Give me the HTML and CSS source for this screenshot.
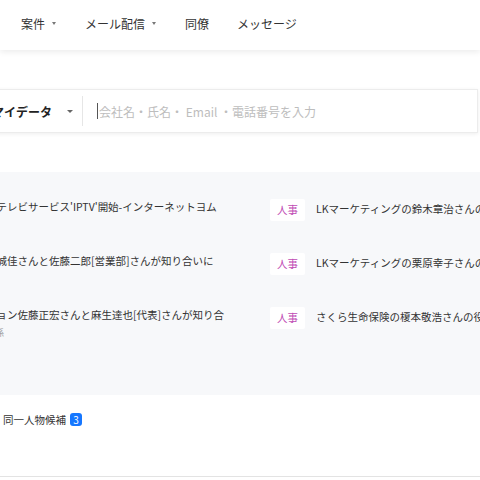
FILE: index.html
```html
<!DOCTYPE html>
<html lang="ja">
<head>
<meta charset="utf-8">
<title>マイデータ</title>
<link rel="stylesheet" href="styles.css">
</head>
<body>
<header class="topbar">
  <nav class="nav">
    <a class="nav-item">案件<span class="caret"></span></a>
    <a class="nav-item">メール配信<span class="caret"></span></a>
    <a class="nav-item">同僚</a>
    <a class="nav-item">メッセージ</a>
  </nav>
</header>
<main class="main">
  <div class="search">
    <div class="scope">マイデータ<span class="caret scope-caret"></span></div>
    <div class="divider"></div>
    <div class="query"><span class="cursor"></span><span class="placeholder">会社名・氏名・ Email ・電話番号を入力</span></div>
  </div>
  <section class="news">
    <div class="row">
      <div class="title-col"><p class="title">光テレビサービス'IPTV'開始-インターネットヨム</p></div>
      <span class="tag">人事</span>
      <p class="desc">LKマーケティングの鈴木章治さんの役職が変更されました</p>
    </div>
    <div class="row">
      <div class="title-col"><p class="title">葛城佳さんと佐藤二郎[営業部]さんが知り合いに</p></div>
      <span class="tag">人事</span>
      <p class="desc">LKマーケティングの栗原幸子さんの役職が変更されました</p>
    </div>
    <div class="row">
      <div class="title-col"><p class="title">ション佐藤正宏さんと麻生達也[代表]さんが知り合</p><p class="meta">関係</p></div>
      <span class="tag">人事</span>
      <p class="desc">さくら生命保険の榎本敬浩さんの役職が変更されました</p>
    </div>
  </section>
  <section class="candidates"><span>同一人物候補</span><span class="badge">3</span></section>
</main>
</body>
</html>
```
FILE: styles.css
```css
body {
  margin: 0;
  font-family: "Noto Sans CJK JP", "Noto Sans", sans-serif;
  background: #fff;
  color: #333;
  overflow: hidden;
}

.topbar {
  position: relative;
  z-index: 1;
  height: 50px;
  background: #fff;
  box-shadow: 0 2px 6px rgba(0, 0, 0, 0.08);
  display: flex;
  align-items: center;
}

.nav {
  display: flex;
  padding-left: 7px;
  margin-top: -3px;
}

.nav-item {
  display: flex;
  align-items: center;
  padding: 0 14px;
  font-size: 12px;
  line-height: 16px;
  color: #333;
}

.caret {
  width: 0;
  height: 0;
  border-left: 2.5px solid transparent;
  border-right: 2.5px solid transparent;
  border-top: 3.5px solid #777;
  margin: 0 1px 0 7px;
}

.main {
  margin: 39px 2px 0 -24px;
}

.search {
  display: flex;
  align-items: center;
  height: 42px;
  border: 1px solid #ececec;
  background: #fff;
  box-shadow: 0 1px 4px rgba(0, 0, 0, 0.07);
}

.scope {
  display: flex;
  align-items: center;
  padding: 0 9px 0 15px;
  font-size: 12px;
  font-weight: 700;
  color: #222;
}

.scope-caret {
  margin: 0 0 0 15px;
  border-left-width: 3px;
  border-right-width: 3px;
  border-top-color: #666;
}

.divider {
  width: 1px;
  height: 30px;
  background: #e6e6e6;
}

.query {
  display: flex;
  align-items: center;
  padding-left: 14px;
}

.cursor {
  width: 1px;
  height: 16px;
  background: #555;
}

.placeholder {
  margin-left: 1px;
  font-size: 12px;
  color: #bdbdbd;
}

.news {
  margin: 39px -2px 0 0;
  padding: 15px 0 46px;
  background: #f7f8fa;
}

.row {
  display: flex;
  align-items: flex-start;
  height: 54px;
  box-sizing: border-box;
  padding: 11px 0 0 10px;
}

.title-col {
  width: 284px;
  flex: none;
}

.title {
  margin: 0;
  font-size: 10.5px;
  line-height: 18px;
  white-space: nowrap;
  color: #333;
}

.meta {
  margin: 2px 0 0;
  font-size: 9px;
  line-height: 14px;
  color: #999;
}

.tag {
  flex: none;
  margin-top: 1px;
  width: 35px;
  height: 22px;
  line-height: 22px;
  text-align: center;
  background: #fff;
  border-radius: 2px;
  color: #c04bb4;
  font-size: 10.5px;
}

.desc {
  flex: 1;
  min-width: 0;
  margin: 0 0 0 11px;
  font-size: 10.5px;
  line-height: 22px;
  white-space: nowrap;
  overflow: hidden;
  color: #333;
}

.candidates {
  display: flex;
  align-items: flex-start;
  height: 82px;
  box-sizing: border-box;
  padding: 18px 0 0 27px;
  margin-right: -2px;
  border-bottom: 1px solid #e3e3e3;
  font-size: 10.5px;
  line-height: 14px;
  color: #333;
}

.badge {
  margin: 0 0 0 4px;
  width: 12px;
  height: 13px;
  line-height: 13px;
  text-align: center;
  background: #1677ff;
  color: #fff;
  border-radius: 3px;
  font-size: 10px;
}
```
